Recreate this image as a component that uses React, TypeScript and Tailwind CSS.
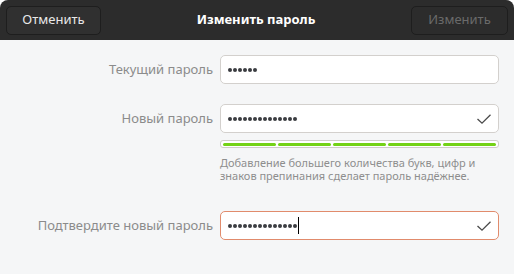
function Check() {
  return (
    <svg width="16" height="16" viewBox="0 0 16 16" className="text-[#4a4a4a]">
      <path d="M1.5 8 L6 12.2 L14.5 3.8" fill="none" stroke="currentColor" strokeWidth="1.3" />
    </svg>
  );
}

function Dots({ n }: { n: number }) {
  return (
    <div className="flex gap-[1px]">
      {Array.from({ length: n }).map((_, i) => (
        <span key={i} className="w-[4px] h-[4px] rounded-full bg-[#3a3c40]" />
      ))}
    </div>
  );
}

function Field({ label, n, check, focus }: { label: string; n: number; check?: boolean; focus?: boolean }) {
  return (
    <div className="flex items-center">
      <div className="w-[213px] text-right text-[13px] text-[#8b8b8b]">{label}</div>
      <div
        className={
          focus
            ? "ml-[7px] w-[279px] h-[29px] rounded-[5px] border border-[#e18b6c] bg-white flex items-center pl-[7px] pr-[6px]"
            : "ml-[7px] w-[279px] h-[29px] rounded-[5px] border border-[#d3d0cd] bg-white flex items-center pl-[7px] pr-[6px]"
        }
      >
        <Dots n={n} />
        {focus && <span className="ml-[1px] w-[1px] h-[17px] bg-black" />}
        <div className="flex-1" />
        {check && <Check />}
      </div>
    </div>
  );
}

export default function App() {
  return (
    <div className="w-[514px] h-[274px] bg-white" style={{ fontFamily: '"Noto Sans", "DejaVu Sans", sans-serif' }}>
      <div className="h-full rounded-t-[8px] overflow-hidden bg-[#f5f6f7] flex flex-col">
        <div className="h-[40px] bg-[#2c2c2c] flex items-center justify-between px-[6px] shrink-0">
          <button className="w-[95px] h-[29px] rounded-[5px] border border-[#1e1e1e] bg-[#303030] text-[13px] text-[#e8e8e8]">
            Отменить
          </button>
          <div className="text-[13px] font-bold text-white">Изменить пароль</div>
          <button className="w-[97px] h-[29px] rounded-[5px] border border-[#1e1e1e] bg-[#2c2c2c] text-[13px] text-[#6a6a6a]">
            Изменить
          </button>
        </div>
        <div className="flex flex-col pt-[15px]">
          <Field label="Текущий пароль" n={6} />
          <div className="mt-[20px]">
            <Field label="Новый пароль" n={14} check />
          </div>
          <div className="ml-[220px] mt-[7px] w-[279px] h-[8px] rounded-[3px] border border-[#cfccc9] bg-white flex gap-[2px] px-[2px] items-center">
            {Array.from({ length: 5 }).map((_, i) => (
              <span key={i} className="flex-1 h-[3px] rounded-full bg-[#73d216]" />
            ))}
          </div>
          <div className="ml-[220px] mt-[8px] w-[279px] text-[11px] leading-[13px] text-[#8e8e8e]">
            Добавление большего количества букв, цифр и знаков препинания сделает пароль надёжнее.
          </div>
          <div className="mt-[29px]">
            <Field label="Подтвердите новый пароль" n={14} check focus />
          </div>
        </div>
      </div>
    </div>
  );
}
